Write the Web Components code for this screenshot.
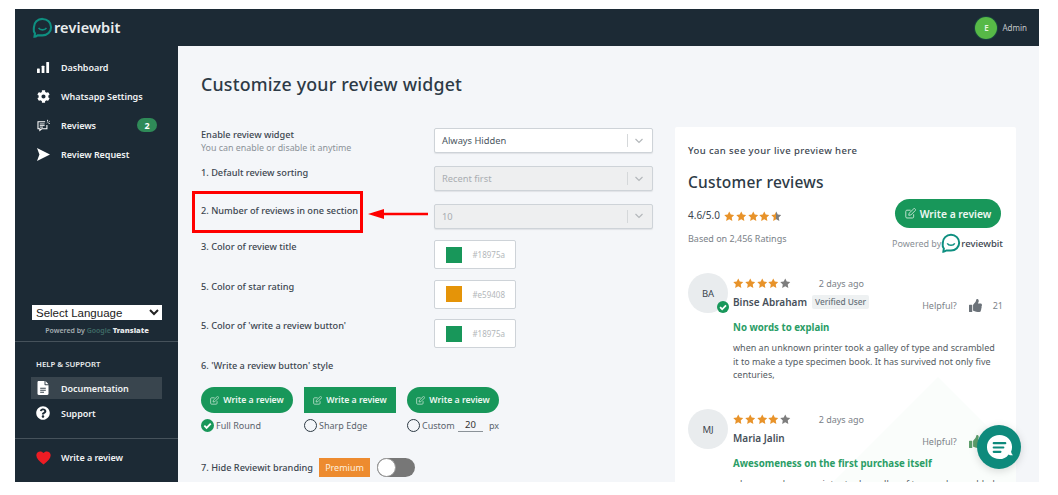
<!DOCTYPE html>
<html>
<head>
<meta charset="utf-8">
<title>reviewbit</title>
<style>
html, body { margin: 0; height: 100%; background: #fff; overflow: hidden; }
body { font-family: "Noto Sans", "Open Sans", sans-serif; padding: 9px 0 0 15px; box-sizing: border-box; }
</style>
</head>
<body>
<rb-app></rb-app>

<script>
const ICONS = {
  bars: '<svg viewBox="0 0 14 12"><rect x="0" y="7" width="3" height="5" rx=".6"/><rect x="5" y="4" width="3" height="8" rx=".6"/><rect x="10" y="0" width="3" height="12" rx=".6"/></svg>',
  gear: '<svg viewBox="0 0 512 512"><path d="M487.4 315.7l-42.6-24.6c4.3-23.2 4.3-47 0-70.2l42.6-24.6c4.9-2.8 7.1-8.6 5.5-14-11.1-35.6-30-67.8-54.7-94.6-3.8-4.1-10-5.1-14.8-2.3L380.8 110c-17.9-15.4-38.5-27.3-60.8-35.1V25.8c0-5.6-3.9-10.5-9.4-11.7-36.7-8.2-74.3-7.8-109.2 0-5.5 1.2-9.4 6.1-9.4 11.7V75c-22.2 7.9-42.8 19.8-60.8 35.1L88.7 85.5c-4.9-2.8-11-1.9-14.8 2.3-24.7 26.7-43.6 58.9-54.7 94.6-1.7 5.4.6 11.2 5.5 14L67.3 221c-4.3 23.2-4.3 47 0 70.2l-42.6 24.6c-4.9 2.8-7.1 8.6-5.5 14 11.1 35.6 30 67.8 54.7 94.6 3.8 4.1 10 5.1 14.8 2.3l42.6-24.6c17.9 15.4 38.5 27.3 60.8 35.1v49.2c0 5.6 3.9 10.5 9.4 11.7 36.7 8.2 74.3 7.8 109.2 0 5.5-1.2 9.4-6.1 9.4-11.7v-49.2c22.2-7.9 42.8-19.8 60.8-35.1l42.6 24.6c4.9 2.8 11 1.9 14.8-2.3 24.7-26.7 43.6-58.9 54.7-94.6 1.5-5.5-.7-11.3-5.6-14.1zM256 336c-44.1 0-80-35.9-80-80s35.9-80 80-80 80 35.9 80 80-35.9 80-80 80z"/></svg>',
  reviews: '<svg viewBox="0 0 16 15" fill="none" stroke="#fff"><path d="M10 3H1.2v8.6h2.3v2l2.4-2h6.3V7" stroke-width="1.3"/><path d="M3.4 5.6h6M3.4 7.6h6M3.4 9.5h4" stroke-width="1.1"/><path d="M13 .5v2M15.6 2.2l-1.5 1.4M12 4.3l1-.9M15.8 5h-1.5" stroke-width="1.1"/></svg>',
  send: '<svg viewBox="0 0 14 14"><path d="M0 0l14 7L0 14l2.6-7z"/></svg>',
  doc: '<svg viewBox="0 0 11 14"><path fill-rule="evenodd" d="M1.2 0H7v3.6c0 .4.3.7.7.7H11v8.5c0 .7-.5 1.2-1.2 1.2H1.2C.5 14 0 13.500 0 12.800V1.200C0 .5.500 0 1.200 0zM2.700 6.700v1h5.600v-1zM2.700 8.700v1h5.600v-1zM2.700 10.700v1h3.800v-1zM8 0l3 3.300H8z"/></svg>',
  help: '<svg viewBox="0 0 512 512"><path d="M504 256c0 137-111 248-248 248S8 393 8 256 119 8 256 8s248 111 248 248zM262.700 90c-54.500 0-89.300 23-116.500 63.800-3.500 5.300-2.300 12.400 2.700 16.300l34.700 26.300c5.200 3.900 12.600 3 16.700-2.100 17.900-22.700 30.100-35.800 57.300-35.800 20.400 0 45.700 13.100 45.700 32.900 0 15-12.400 22.700-32.600 34-23.600 13.200-54.800 29.700-54.800 70.900V300c0 6.600 5.400 12 12 12h56c6.600 0 12-5.400 12-12v-1.300c0-28.600 83.500-29.800 83.500-107.200C379.400 133.200 318.900 90 262.700 90zM256 339c-25.500 0-46.200 20.700-46.200 46.200 0 25.500 20.700 46.200 46.200 46.200s46.200-20.700 46.200-46.200c0-25.500-20.700-46.200-46.200-46.200z"/></svg>',
  heart: '<svg viewBox="0 0 14 14"><path d="M7 13.500C2.800 10.500.3 8 .3 5 .3 2.700 2 1.300 3.900 1.300c1.300 0 2.400.5 3.100 1.500.7-1 1.800-1.500 3.100-1.500 1.900 0 3.600 1.400 3.600 3.700 0 3-2.500 5.500-6.700 8.500z" fill="#ed1c24"/></svg>',
  edit: '<svg viewBox="0 0 14 14" fill="none" stroke="currentColor" stroke-width="1.200"><path d="M11 8v3.300c0 .9-.6 1.400-1.400 1.400H2.400c-.9 0-1.400-.6-1.400-1.400V4.200c0-.9.6-1.400 1.400-1.400h4.700"/><path d="M5.200 6.700l-.4 2.600 2.600-.4 5.800-5.800c.5-.5.500-1.200 0-1.600l-.5-.5c-.5-.5-1.200-.5-1.600 0z"/></svg>',
  thumb: '<svg viewBox="0 0 512 512"><path d="M104 224H24c-13.300 0-24 10.700-24 24v240c0 13.300 10.700 24 24 24h80c13.300 0 24-10.700 24-24V248c0-13.300-10.700-24-24-24zM384 81.500c0 42.400-26 66.200-33.300 94.500h101.700c33.400 0 59.400 27.700 59.600 58 .1 17.900-7.500 37.200-19.400 49.200l-.1.100c9.800 23.300 8.200 56-9.300 79.400 8.700 25.900-.1 57.700-16.400 74.800 4.300 17.600 2.200 32.600-6.100 44.600C440.200 511.600 389.600 512 346.800 512l-2.800 0c-48.300 0-87.800-17.600-119.600-31.700-16-7.100-36.800-15.900-52.700-16.200-6.500-.1-11.800-5.500-11.800-12V238.300c0-3.200 1.300-6.300 3.600-8.500 39.600-39.100 56.600-80.500 89.100-113 14.800-14.800 20.200-37.200 25.400-58.900C282.500 39.300 291.800 0 312 0c24 0 72 8 72 81.500z"/></svg>',
  check: '<svg viewBox="0 0 14 14"><circle cx="7" cy="7" r="7" fill="#18975a"/><path d="M3.600 7.200l2.400 2.400 4.500-4.600" fill="none" stroke="#fff" stroke-width="2"/></svg>',
};

const LOGO = (ring, size) => `<svg viewBox="0 0 24 24" width="${size}" height="${size}" fill="none"><path d="M12 2.200c5.600 0 9.800 4.200 9.800 9.400s-4.200 9.400-9.800 9.400H6.400c-1.700 1.200-2.900 1.500-3.600 1.500l.6-3.800C1 16.800 2.200 14 2.200 11.600 2.200 6.400 6.400 2.200 12 2.200z" stroke="${ring}" stroke-width="2.400"/><path d="M7.500 12.500c1.800 3 7.200 3 9 0" stroke="${ring}" stroke-width="1.800"/></svg>`;

function define(name, css, html) {
  customElements.define(name, class extends HTMLElement {
    constructor() {
      super();
      this.attachShadow({ mode: "open" });
    }
    connectedCallback() {
      if (this.shadowRoot.firstChild) return;
      const markup = typeof html === "function" ? html(this) : html;
      this.shadowRoot.innerHTML = `<style>${css}</style>${markup}`;
    }
  });
}

define("rb-stars", `
  :host { display: inline-flex; gap: 1.3px; vertical-align: middle; }
  svg { width: 10.500px; height: 10.500px; display: block; }
`, (el) => {
  const value = parseFloat(el.getAttribute("value"));
  const id = "half" + Math.random().toString(36).slice(2);
  let out = `<svg width="0" height="0" style="position:absolute"><linearGradient id="${id}"><stop offset="50%" stop-color="#e8932a"/><stop offset="50%" stop-color="#7d7d7d"/></linearGradient></svg>`;
  for (let i = 1; i <= 5; i++) {
    const fill = value >= i ? "#e8932a" : value > i - 1 ? `url(#${id})` : "#7d7d7d";
    out += `<svg viewBox="0 0 20 20"><path fill="${fill}" d="M10 .8l2.900 6.100 6.600.9-4.800 4.600 1.200 6.600L10 15.800 4.100 19l1.200-6.600L.5 7.800l6.600-.9z"/></svg>`;
  }
  return out;
});

define("rb-nav-item", `
  :host { display: flex; align-items: center; height: 29px; font-size: 9px; font-weight: 600; letter-spacing: -.05px; color: #f1f3f4; position: relative; }
  .ic { width: var(--iw, 33px); flex: none; display: flex; justify-content: center; padding-right: var(--ipr, 3px); box-sizing: border-box; fill: #fff; }
  .ic svg { display: block; height: var(--ih, 13px); width: var(--ih, 13px); }
  .badge { position: absolute; left: 109px; top: 7px; width: 20px; height: 14px; border-radius: 7px; background: #2f8a58; color: #fff; font-size: 9px; font-weight: 700; display: flex; align-items: center; justify-content: center; }
`, (el) => `<span class="ic">${ICONS[el.getAttribute("icon")]}</span><span><slot></slot></span>${el.hasAttribute("badge") ? `<span class="badge">${el.getAttribute("badge")}</span>` : ""}`);

define("rb-sidebar", `
  :host { display: flex; flex-direction: column; width: 163px; flex: none; background: #1c2a35; overflow: hidden; }
  nav { padding: 7px 0 0 13px; }
  .spacer { flex: 1; }
  .lang { padding: 0 16px 0 17px; text-align: center; }
  select { display: block; width: 130px; height: 15px; padding: 0; border: 0; border-radius: 0; background: #fff; color: #222; font: 11.500px "Liberation Sans", sans-serif; }
  .powered { font-size: 7px; color: #a5adb2; line-height: 10px; margin-top: 5px; font-weight: 600; white-space: nowrap; }
  .powered b { color: #e4e7e9; font-size: 7.500px; }
  .powered i { font-style: normal; color: #3f6a66; }
  hr { border: 0; border-top: 1px solid #46525b; margin: 5px 0 0; }
  .help { height: 96px; padding: 16px 16px 0 16px; box-sizing: border-box; }
  h4 { margin: 0 0 7px 5px; font-size: 7.800px; font-weight: 600; color: #e8eaeb; line-height: 12px; }
  .docs, .sup { display: flex; height: 22px; --ih: 14px; --iw: 30px; --ipr: 6px; }
  .docs { background: #39454e; margin-bottom: 3px; }
  .foot { height: 43px; display: flex; align-items: center; padding: 0 0 7px 13px; box-sizing: border-box; }
  .foot-rule { margin: 0; }
`, `
  <nav>
    <rb-nav-item icon="bars">Dashboard</rb-nav-item>
    <rb-nav-item icon="gear">Whatsapp Settings</rb-nav-item>
    <rb-nav-item icon="reviews" badge="2">Reviews</rb-nav-item>
    <rb-nav-item icon="send">Review Request</rb-nav-item>
  </nav>
  <div class="spacer"></div>
  <div class="lang">
    <select><option>Select Language</option></select>
    <div class="powered">Powered by <i>Google</i> <b>Translate</b></div>
  </div>
  <hr>
  <div class="help">
    <h4>HELP &amp; SUPPORT</h4>
    <rb-nav-item class="docs" icon="doc">Documentation</rb-nav-item>
    <rb-nav-item class="sup" icon="help">Support</rb-nav-item>
  </div>
  <hr class="foot-rule">
  <div class="foot"><rb-nav-item icon="heart" style="--ih:15px;flex:1">Write a review</rb-nav-item></div>
`);

define("rb-header", `
  :host { display: flex; align-items: center; height: 37px; background: #1c2a35; padding: 0 12px 0 17px; flex: none; color: #fff; }
  .brand { display: flex; align-items: center; font-size: 14.500px; font-weight: 600; color: #e9edee; letter-spacing: .1px; margin-top: -1px; }
  .brand span { margin-left: 1px; }
  .user { margin-left: auto; display: flex; align-items: center; gap: 5px; font-size: 8px; color: #c3c8cb; }
  .avatar { width: 22px; height: 22px; border-radius: 50%; background: #57b947; color: #e6f5e4; font-size: 8px; font-weight: 600; display: flex; align-items: center; justify-content: center; box-shadow: 0 0 0 1px #19443f; }
`, `
  <div class="brand">${LOGO("#0e8f80", 21)}<span>reviewbit</span></div>
  <div class="user"><span class="avatar">E</span><span>Admin</span></div>
`);

define("rb-select", `
  :host { display: flex; align-items: center; width: 219px; height: 25px; box-sizing: border-box; background: #fff; border: 1px solid #ced3d8; border-radius: 2px; box-shadow: 0 1px 1px #e0e3e6; font-size: 9.300px; color: #4a5560; padding-left: 7px; }
  :host([disabled]) { background: #eeeff0; color: #a9adb0; }
  span { flex: 1; }
  i { width: 1px; height: 13px; background: #d5d8da; }
  svg { width: 8px; height: 6px; margin: 0 9px 0 7px; fill: none; stroke: #b4b8bb; stroke-width: 1.200; }
`, `<span><slot></slot></span><i></i><svg viewBox="0 0 8 6"><path d="M.5 1l3.500 3.500L7.500 1"/></svg>`);

define("rb-color", `
  :host { display: flex; align-items: center; width: 82px; height: 29px; box-sizing: border-box; background: #fff; border: 1px solid #ced3d8; border-radius: 2px; font-size: 8px; color: #b3b7ba; padding: 0 10px 0 11px; }
  b { width: 16px; height: 16px; flex: none; background: var(--c); }
  span { margin-left: auto; }
`, (el) => `<b style="--c:${el.getAttribute("value")}"></b><span>${el.getAttribute("value")}</span>`);

define("rb-write-button", `
  :host { display: inline-flex; align-items: center; justify-content: center; gap: 4px; width: 92px; height: 26px; background: #18975a; color: #eef7f2; border-radius: 13px; font-size: 8.700px; font-weight: 600; }
  :host([shape="sharp"]) { border-radius: 0; }
  :host([size="large"]) { width: 106px; height: 29px; border-radius: 15px; font-size: 10.300px; gap: 4px; }
  svg { width: 9px; height: 9px; color: #c8e6d5; }
  :host([size="large"]) svg { width: 11px; height: 11px; }
`, `${ICONS.edit}<span><slot></slot></span>`);

define("rb-radio", `
  :host { display: flex; align-items: center; gap: 2px; font-size: 9px; color: #5a636c; height: 13px; margin-top: 6px; }
  i { width: 13px; height: 13px; box-sizing: border-box; border: 1.200px solid #2d3a44; border-radius: 50%; flex: none; }
  svg { width: 13px; height: 13px; flex: none; display: block; }
`, (el) => `${el.hasAttribute("checked") ? ICONS.check : "<i></i>"}<slot></slot>`);

define("rb-form", `
  :host { display: block; width: 452px; padding-top: 1px; font-size: 9.200px; color: #3c4650; position: relative; flex: none; }
  .row { display: flex; justify-content: space-between; position: relative; }
  .row.sel { height: 37.500px; }
  .row.col { height: 39.500px; }
  .lab { line-height: 13px; font-weight: 500; }
  .lab small { display: block; font-size: 8.900px; color: #8b9298; font-weight: 400; }
  .ctl { width: 219px; flex: none; }
  .mark { position: absolute; left: -9px; top: -12.500px; width: 171px; height: 42px; border: 3px solid #f00; box-sizing: border-box; }
  .arrow { position: absolute; left: 167px; top: 5px; width: 60px; height: 10px; }
  .styles { display: flex; gap: 11px; margin-top: 15px; }
  .styles > div { width: 92px; }
  .px { display: inline-block; width: 28px; margin: 0 3.500px 0 1px; border-bottom: 1px solid #8b9298; text-align: center; color: #333; line-height: 12px; font-size: 9.500px; }
  .brand { display: flex; align-items: center; margin-top: 26px; }
  .premium { background: #ed8b2f; color: #fdeedd; font-size: 9px; width: 51px; height: 19px; line-height: 19px; text-align: center; margin-left: 6px; }
  .toggle { width: 38px; height: 19px; border-radius: 10px; background: #777; margin-left: 7px; position: relative; }
  .toggle::before { content: ""; position: absolute; left: 0; top: 0; width: 19px; height: 19px; box-sizing: border-box; border-radius: 50%; background: #fff; border: 1px solid #999; }
`, `
  <div class="row sel" style="height:38px"><div class="lab">Enable review widget<small>You can enable or disable it anytime</small></div><rb-select class="ctl">Always Hidden</rb-select></div>
  <div class="row sel"><div class="lab">1. Default review sorting</div><rb-select class="ctl" disabled>Recent first</rb-select></div>
  <div class="row sel" style="height:36.500px"><div class="lab">2. Number of reviews in one section</div>
    <div class="mark"></div>
    <svg class="arrow" viewBox="0 0 60 10"><path d="M0 5l16-5v3.800h44v2.400H16V10z" fill="#f00"/></svg>
    <rb-select class="ctl" disabled>10</rb-select></div>
  <div class="row col"><div class="lab">3. Color of review title</div><div class="ctl"><rb-color value="#18975a"></rb-color></div></div>
  <div class="row col"><div class="lab">5. Color of star rating</div><div class="ctl"><rb-color value="#e59408"></rb-color></div></div>
  <div class="row col" style="height:38px"><div class="lab">5. Color of 'write a review button'</div><div class="ctl"><rb-color value="#18975a"></rb-color></div></div>
  <div class="lab" style="margin-top:2px">6. 'Write a review button' style</div>
  <div class="styles">
    <div><rb-write-button>Write a review</rb-write-button><rb-radio checked>Full Round</rb-radio></div>
    <div><rb-write-button shape="sharp">Write a review</rb-write-button><rb-radio>Sharp Edge</rb-radio></div>
    <div style="white-space:nowrap"><rb-write-button>Write a review</rb-write-button><rb-radio>Custom <span class="px">20</span> px</rb-radio></div>
  </div>
  <div class="brand"><span class="lab">7. Hide Reviewit branding</span><span class="premium">Premium</span><span class="toggle"></span></div>
`);

define("rb-review", `
  :host { display: grid; grid-template-columns: 45px 1fr; position: relative; margin-bottom: 28.500px; color: #555c63; }
  .av { width: 40px; height: 40px; border-radius: 50%; background: #e9ecee; color: #3d4750; font-size: 9.500px; display: flex; align-items: center; justify-content: center; position: relative; margin-top: -1px; }
  .av svg { position: absolute; right: -1px; bottom: 0; width: 12px; height: 12px; }
  .top { display: flex; align-items: center; height: 12px; margin-top: 3px; font-size: 9px; color: #7a8188; }
  .top span { margin-left: 28px; }
  .name { display: flex; align-items: center; font-size: 10px; font-weight: 600; color: #47505a; margin-top: 6px; height: 14px; }
  .ver { font-size: 8.300px; font-weight: 500; background: #eef1f2; color: #68727a; padding: 0 3px; margin-left: 5px; line-height: 14px; border-radius: 2px; }
  .help { position: absolute; right: -1px; top: 25px; display: flex; align-items: center; font-size: 9px; color: #7d848a; }
  .help svg { width: 13px; height: 13px; fill: var(--tc, #6b7279); margin: 0 11px 0 12px; }
  .title { grid-column: 2; font-size: 9.700px; font-weight: 700; color: #2a9d66; margin: 8px 0 6px; line-height: 14px; white-space: nowrap; }
  .body { grid-column: 1 / 3; margin-left: 45px; font-size: 9px; line-height: 13.500px; color: #555c63; white-space: nowrap; }
`, (el) => `
  <div class="av">${el.getAttribute("initials")}${el.hasAttribute("verified") ? ICONS.check : ""}</div>
  <div>
    <div class="top"><rb-stars value="4"></rb-stars><span>2 days ago</span></div>
    <div class="name">${el.getAttribute("name")}${el.hasAttribute("verified") ? '<span class="ver">Verified User</span>' : ""}</div>
  </div>
  <div class="help">Helpful?${ICONS.thumb}<span>${el.getAttribute("likes") || ""}</span></div>
  <div class="title">${el.getAttribute("title")}</div>
  <div class="body"><slot></slot></div>
`);

define("rb-preview", `
  :host { display: block; width: 341px; flex: none; height: 400px; background: #fff; padding: 17px 14px 0 13px; box-sizing: border-box; position: relative; overflow: hidden; border-radius: 2px 2px 0 0; }
  .wm { position: absolute; left: 143px; top: 250px; width: 240px; height: 120px; }
  .hint { font-size: 9.500px; font-weight: 500; color: #3c4650; line-height: 14px; letter-spacing: .4px; position: relative; }
  h2 { font-size: 15.500px; font-weight: 500; color: #2d3a46; margin: 13px 0 0; line-height: 22px; letter-spacing: .2px; position: relative; }
  .sum { display: flex; justify-content: space-between; margin-top: 6px; position: relative; }
  .score { font-size: 10px; color: #3c4650; line-height: 14px; margin-top: 9px; display: flex; align-items: center; gap: 4px; }
  .score rb-stars { margin-top: 2px; }
  .based { font-size: 9px; color: #7a8188; margin-top: 11px; line-height: 12px; }
  .cta { display: flex; flex-direction: column; align-items: flex-end; margin-right: 1px; }
  .by { display: flex; align-items: center; font-size: 9px; color: #8a9096; margin-top: 5px; margin-right: -2px; }
  .by b { font-weight: 500; color: #3c4650; font-size: 9.500px; }
  .list { margin-top: 21px; position: relative; }
`, `
  <svg class="wm" viewBox="0 0 240 120"><path d="M0 120L120 0l120 120z" fill="#fafdfb"/></svg>
  <div class="hint">You can see your live preview here</div>
  <h2>Customer reviews</h2>
  <div class="sum">
    <div>
      <div class="score">4.6/5.0 <rb-stars value="4.6"></rb-stars></div>
      <div class="based">Based on 2,456 Ratings</div>
    </div>
    <div class="cta">
      <rb-write-button size="large">Write a review</rb-write-button>
      <div class="by">Powered by${LOGO("#0e8f80", 20)}<b>reviewbit</b></div>
    </div>
  </div>
  <div class="list">
    <rb-review initials="BA" verified name="Binse Abraham" likes="21" title="No words to explain">when an unknown printer took a galley of type and scrambled<br>it to make a type specimen book. It has survived not only five<br>centuries,</rb-review>
    <rb-review initials="MJ" name="Maria Jalin" likes="21" title="Awesomeness on the first purchase itself" style="--tc:#5d9e6c">when an unknown printer took a galley of type and scrambled</rb-review>
  </div>
`);

define("rb-chat", `
  :host { position: absolute; right: 18px; bottom: 13px; width: 44px; height: 44px; border-radius: 50%; background: #0e8a7c; display: flex; align-items: center; justify-content: center; box-shadow: 0 2px 8px rgba(0,0,0,.15); }
  svg { width: 27px; height: 27px; display: block; }
`, `<svg viewBox="0 0 28 28"><path d="M14 1c7.500 0 13 5.500 13 12.500 0 1.800-.3 3.500-1 5 .3 1.500 1 2.700 2 3.500-1.800.3-3.300 0-4.600-.8C21 24.800 17.700 26 14 26 6.500 26 1 20.500 1 13.500S6.500 1 14 1z" fill="#fff"/><path d="M8 9.500h12M8 14h10M8 18.500h7" stroke="#0e8a7c" stroke-width="2.200" stroke-linecap="round"/></svg>`);

define("rb-app", `
  :host { display: flex; flex-direction: column; width: 1024px; height: 473px; overflow: hidden; position: relative; }
  .body { display: flex; flex: 1; min-height: 0; }
  main { flex: 1; background: #f4f6f9; padding: 27px 23px 0 23px; overflow: hidden; }
  h1 { font-size: 17.800px; font-weight: 500; color: #2d3a46; margin: 0 0 32px; line-height: 22px; letter-spacing: .2px; }
  .cols { display: flex; gap: 22px; align-items: flex-start; }
`, `
  <rb-header></rb-header>
  <div class="body">
    <rb-sidebar></rb-sidebar>
    <main>
      <h1>Customize your review widget</h1>
      <div class="cols"><rb-form></rb-form><rb-preview></rb-preview></div>
    </main>
  </div>
  <rb-chat></rb-chat>
`);
</script>
</body>
</html>
